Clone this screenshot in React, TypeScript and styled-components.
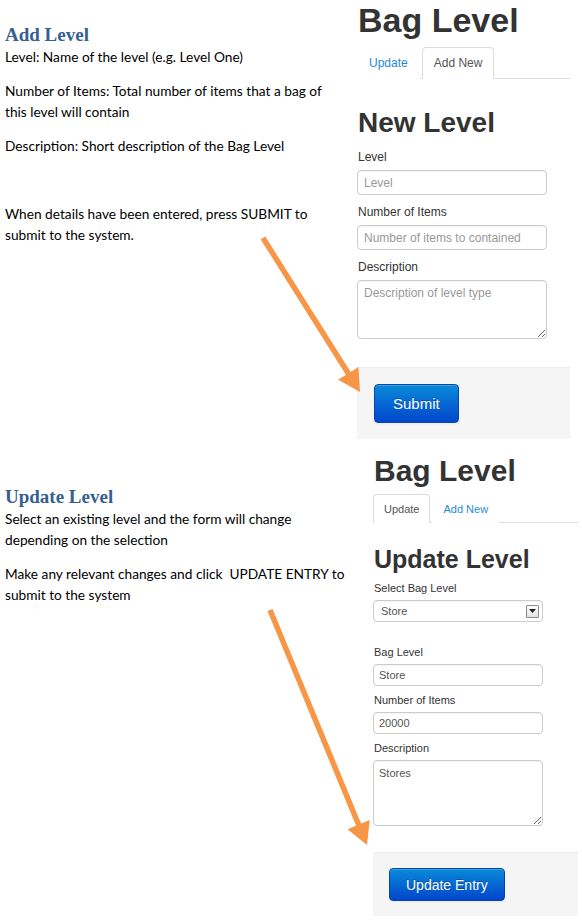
import React from 'react';
import styled, { createGlobalStyle } from 'styled-components';

type Size = 'lg' | 'sm';

const sizes = {
  lg: {
    width: 213,
    titleFont: 34,
    titleLh: 38,
    titleTop: 1,
    tabsTop: 8,
    tabH: 32,
    tabFont: 12,
    tabPad: 11,
    headFont: 28,
    headLh: 31,
    headTop: 28,
    headBottom: 11,
    labelFont: 12,
    labelLh: 17,
    fieldW: 190,
    inputH: 25,
    inputPad: 6,
    groupGap: 9,
    footerTop: 28,
    footerPadY: 16,
    footerPadX: 17,
    btnFont: 15,
    btnH: 39,
    btnPadX: 18,
  },
  sm: {
    width: 205,
    titleFont: 30,
    titleLh: 34,
    titleTop: 9,
    tabsTop: 6,
    tabH: 29,
    tabFont: 11,
    tabPad: 10,
    headFont: 25,
    headLh: 28,
    headTop: 22,
    headBottom: 8,
    labelFont: 11,
    labelLh: 15,
    fieldW: 170,
    inputH: 22,
    inputPad: 5,
    groupGap: 7,
    footerTop: 26,
    footerPadY: 15,
    footerPadX: 16,
    btnFont: 14,
    btnH: 33,
    btnPadX: 16,
  },
};

const GlobalStyle = createGlobalStyle`
  html, body {
    margin: 0;
    padding: 0;
    background: #ffffff;
  }
  * {
    box-sizing: border-box;
  }
`;

const Page = styled.div`
  position: relative;
  width: 582px;
  height: 922px;
  overflow: hidden;
  background: #ffffff;
`;

const Section = styled.div<{ $height?: number }>`
  display: flex;
  height: ${(p) => (p.$height ? `${p.$height}px` : 'auto')};
`;

const DocColumn = styled.div<{ $width: number; $top: number; $text: number }>`
  width: ${(p) => p.$width}px;
  flex-shrink: 0;
  padding: ${(p) => p.$top}px 0 0 5px;
  font-family: Lato, 'Open Sans', sans-serif;
  font-size: 13.7px;
  line-height: 21px;
  color: #000000;

  p {
    max-width: ${(p) => p.$text}px;
  }
`;

const DocHeading = styled.h2`
  margin: 0;
  font-family: 'Liberation Serif', serif;
  font-size: 19px;
  line-height: 22px;
  font-weight: bold;
  color: #365f91;
`;

const DocPara = styled.p`
  margin: 0 0 13px;
  min-height: 21px;
`;

const Panel = styled.div<{ $size: Size }>`
  width: ${(p) => sizes[p.$size].width}px;
  flex-shrink: 0;
  display: flex;
  flex-direction: column;
  font-family: 'Liberation Sans', Arial, sans-serif;
  color: #333333;
`;

const Title = styled.h1<{ $size: Size }>`
  margin: ${(p) => sizes[p.$size].titleTop}px 0 0 1px;
  font-size: ${(p) => sizes[p.$size].titleFont}px;
  line-height: ${(p) => sizes[p.$size].titleLh}px;
  font-weight: bold;
  color: #333333;
`;

const TabList = styled.div<{ $size: Size }>`
  display: flex;
  margin-top: ${(p) => sizes[p.$size].tabsTop}px;
  border-bottom: 1px solid #dddddd;
`;

const Tab = styled.div<{ $size: Size; $active?: boolean }>`
  display: flex;
  align-items: center;
  height: ${(p) => sizes[p.$size].tabH}px;
  padding: 0 ${(p) => sizes[p.$size].tabPad}px;
  margin-right: 2px;
  margin-bottom: -1px;
  font-size: ${(p) => sizes[p.$size].tabFont}px;
  border: 1px solid ${(p) => (p.$active ? '#dddddd' : 'transparent')};
  border-bottom-color: transparent;
  border-radius: 4px 4px 0 0;
  background: #ffffff;
  color: ${(p) => (p.$active ? '#555555' : '#2a8ad6')};
`;

const FormHeading = styled.h2<{ $size: Size }>`
  margin: ${(p) => sizes[p.$size].headTop}px 0 ${(p) => sizes[p.$size].headBottom}px 1px;
  font-size: ${(p) => sizes[p.$size].headFont}px;
  line-height: ${(p) => sizes[p.$size].headLh}px;
  font-weight: bold;
  color: #333333;
`;

const Group = styled.div<{ $size: Size; $gap?: number }>`
  display: flex;
  flex-direction: column;
  gap: 4px;
  margin-bottom: ${(p) => (p.$gap !== undefined ? p.$gap : sizes[p.$size].groupGap)}px;
`;

const Label = styled.label<{ $size: Size }>`
  display: block;
  padding-left: 1px;
  font-size: ${(p) => sizes[p.$size].labelFont}px;
  line-height: ${(p) => sizes[p.$size].labelLh}px;
  color: #333333;
`;

const fieldBase = `
  display: block;
  margin: 0;
  font-family: 'Liberation Sans', Arial, sans-serif;
  color: #555555;
  background: #ffffff;
  border: 1px solid #cccccc;
  border-radius: 4px;
  box-shadow: inset 0 1px 1px rgba(0, 0, 0, 0.05);
  outline: none;
  &::placeholder {
    color: #999999;
  }
`;

const Input = styled.input<{ $size: Size }>`
  ${fieldBase}
  width: ${(p) => sizes[p.$size].fieldW}px;
  height: ${(p) => sizes[p.$size].inputH}px;
  padding: 0 ${(p) => sizes[p.$size].inputPad}px;
  font-size: ${(p) => sizes[p.$size].labelFont}px;
`;

const TextArea = styled.textarea<{ $size: Size; $height: number }>`
  ${fieldBase}
  width: ${(p) => sizes[p.$size].fieldW}px;
  height: ${(p) => p.$height}px;
  padding: 5px ${(p) => sizes[p.$size].inputPad}px;
  font-size: ${(p) => sizes[p.$size].labelFont}px;
  line-height: 15px;
  resize: vertical;
`;

const SelectBox = styled.div<{ $size: Size }>`
  ${fieldBase}
  display: flex;
  align-items: center;
  justify-content: space-between;
  width: ${(p) => sizes[p.$size].fieldW}px;
  height: ${(p) => sizes[p.$size].inputH}px;
  padding: 0 3px 0 ${(p) => sizes[p.$size].inputPad + 2}px;
  font-size: ${(p) => sizes[p.$size].labelFont}px;
`;

const DropButton = styled.span`
  display: flex;
  align-items: center;
  justify-content: center;
  width: 13px;
  height: 13px;
  border: 1px solid #8c8c8c;
  border-radius: 1px;
  background: linear-gradient(to bottom, #fdfdfd, #e2e2e2);
`;

const Footer = styled.div<{ $size: Size }>`
  margin-top: ${(p) => sizes[p.$size].footerTop}px;
  padding: ${(p) => sizes[p.$size].footerPadY}px ${(p) => sizes[p.$size].footerPadX}px;
  background: #f5f5f5;
  border-top: 1px solid #ececec;
`;

const PrimaryButton = styled.button<{ $size: Size }>`
  display: block;
  height: ${(p) => sizes[p.$size].btnH}px;
  padding: 0 ${(p) => sizes[p.$size].btnPadX}px;
  font-family: 'Liberation Sans', Arial, sans-serif;
  font-size: ${(p) => sizes[p.$size].btnFont}px;
  color: #ffffff;
  text-shadow: 0 -1px 0 rgba(0, 0, 0, 0.25);
  background: linear-gradient(to bottom, #0a8ad8, #0046cc);
  border: 1px solid #0a46a8;
  border-radius: 4px;
  box-shadow: inset 0 1px 0 rgba(255, 255, 255, 0.2), 0 1px 2px rgba(0, 0, 0, 0.05);
`;

const ArrowLayer = styled.svg`
  position: absolute;
  left: 0;
  top: 0;
  pointer-events: none;
`;

const ARROW = '#f79646';

type Pt = [number, number];

const Arrow: React.FC<{ from: Pt; tip: Pt }> = ({ from, tip }) => {
  const dx = tip[0] - from[0];
  const dy = tip[1] - from[1];
  const len = Math.hypot(dx, dy);
  const ux = dx / len;
  const uy = dy / len;
  const headLen = 22;
  const halfW = 12;
  const bx = tip[0] - ux * headLen;
  const by = tip[1] - uy * headLen;
  const pts = [
    `${tip[0]},${tip[1]}`,
    `${bx + uy * halfW},${by - ux * halfW}`,
    `${bx - uy * halfW},${by + ux * halfW}`,
  ].join(' ');
  return (
    <g>
      <line
        x1={from[0]}
        y1={from[1]}
        x2={bx + ux * 2}
        y2={by + uy * 2}
        stroke={ARROW}
        strokeWidth={5.5}
      />
      <polygon points={pts} fill={ARROW} />
    </g>
  );
};

const Triangle = () => (
  <svg width="7" height="4" viewBox="0 0 7 4">
    <path d="M0 0 L7 0 L3.5 4 Z" fill="#222" />
  </svg>
);

export default function App() {
  return (
    <Page>
      <GlobalStyle />
      <Section $height={445}>
        <DocColumn $width={357} $top={24} $text={335}>
          <DocHeading>Add Level</DocHeading>
          <DocPara>Level: Name of the level (e.g. Level One)</DocPara>
          <DocPara>
            Number of Items: Total number of items that a bag of this level will contain
          </DocPara>
          <DocPara>Description: Short description of the Bag Level</DocPara>
          <DocPara />
          <DocPara>When details have been entered, press SUBMIT to submit to the system.</DocPara>
        </DocColumn>
        <Panel $size="lg">
          <Title $size="lg">Bag Level</Title>
          <TabList $size="lg">
            <Tab $size="lg">Update</Tab>
            <Tab $size="lg" $active>
              Add New
            </Tab>
          </TabList>
          <FormHeading $size="lg">New Level</FormHeading>
          <Group $size="lg">
            <Label $size="lg">Level</Label>
            <Input $size="lg" placeholder="Level" readOnly />
          </Group>
          <Group $size="lg">
            <Label $size="lg">Number of Items</Label>
            <Input $size="lg" placeholder="Number of items to contained" readOnly />
          </Group>
          <Group $size="lg" $gap={0}>
            <Label $size="lg">Description</Label>
            <TextArea $size="lg" $height={59} placeholder="Description of level type" readOnly />
          </Group>
          <Footer $size="lg">
            <PrimaryButton $size="lg">Submit</PrimaryButton>
          </Footer>
        </Panel>
      </Section>
      <Section>
        <DocColumn $width={373} $top={41} $text={348}>
          <DocHeading>Update Level</DocHeading>
          <DocPara>Select an existing level and the form will change depending on the selection</DocPara>
          <DocPara>Make any relevant changes and click&nbsp; UPDATE ENTRY to submit to the system</DocPara>
        </DocColumn>
        <Panel $size="sm">
          <Title $size="sm">Bag Level</Title>
          <TabList $size="sm">
            <Tab $size="sm" $active>
              Update
            </Tab>
            <Tab $size="sm">Add New</Tab>
          </TabList>
          <FormHeading $size="sm">Update Level</FormHeading>
          <Group $size="sm" $gap={23}>
            <Label $size="sm">Select Bag Level</Label>
            <SelectBox $size="sm">
              <span>Store</span>
              <DropButton>
                <Triangle />
              </DropButton>
            </SelectBox>
          </Group>
          <Group $size="sm">
            <Label $size="sm">Bag Level</Label>
            <Input $size="sm" value="Store" readOnly />
          </Group>
          <Group $size="sm">
            <Label $size="sm">Number of Items</Label>
            <Input $size="sm" value="20000" readOnly />
          </Group>
          <Group $size="sm" $gap={0}>
            <Label $size="sm">Description</Label>
            <TextArea $size="sm" $height={66} value="Stores" readOnly />
          </Group>
          <Footer $size="sm">
            <PrimaryButton $size="sm">Update Entry</PrimaryButton>
          </Footer>
        </Panel>
      </Section>
      <ArrowLayer width="582" height="922" viewBox="0 0 582 922">
        <Arrow from={[263, 238]} tip={[360, 392]} />
        <Arrow from={[270, 610]} tip={[367, 845]} />
      </ArrowLayer>
    </Page>
  );
}
